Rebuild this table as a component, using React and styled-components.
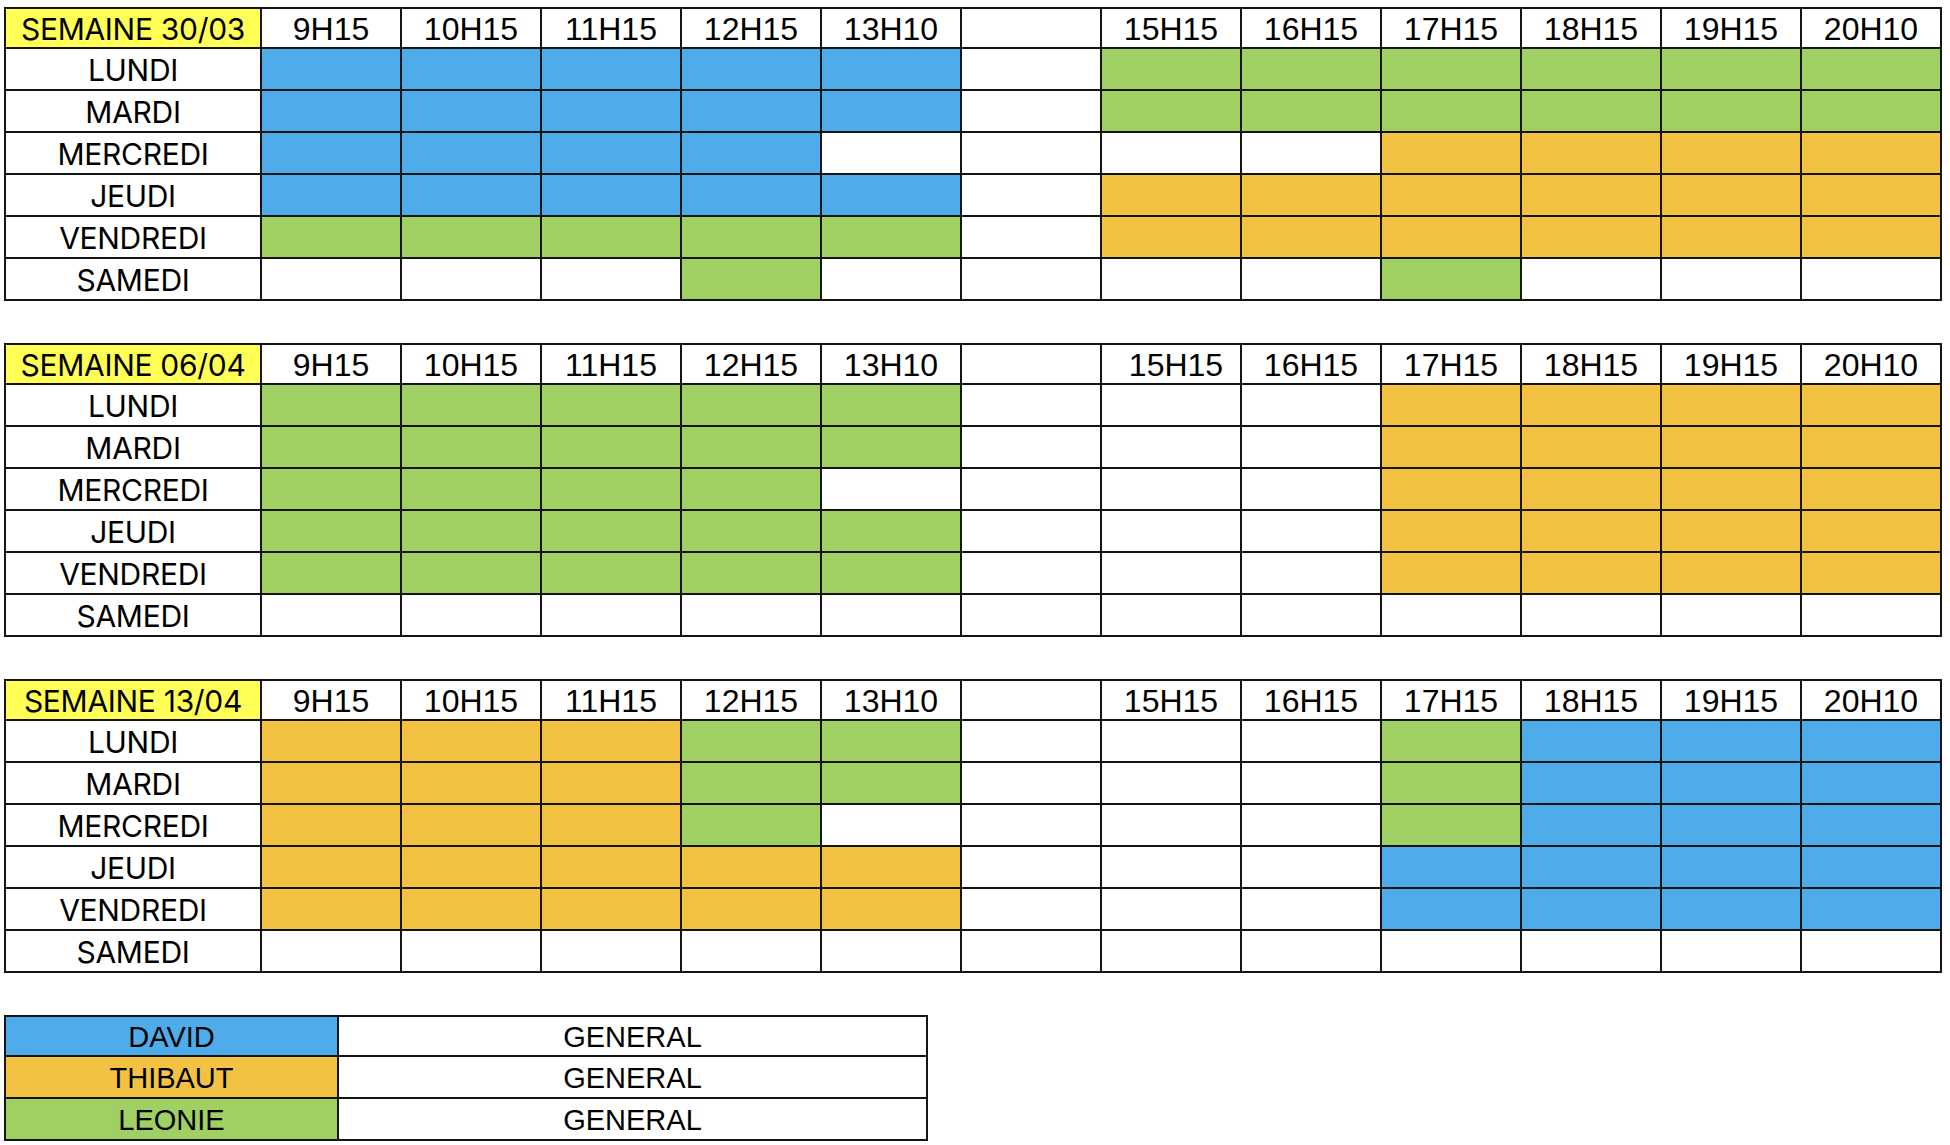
import React from "react";
import styled, { createGlobalStyle } from "styled-components";

const GlobalStyle = createGlobalStyle`
  html, body {
    margin: 0;
    padding: 0;
    background: #ffffff;
  }
  * {
    box-sizing: border-box;
  }
`;

const COLORS = {
  B: "#4facea",
  G: "#a0cf63",
  O: "#f4c243",
  _: "#ffffff",
};

const Page = styled.div`
  padding: 7px 0 0 4px;
  display: flex;
  flex-direction: column;
  gap: 42px;
`;

// header row is 40px + the 2px top border, same pitch as the other rows
const Grid = styled.div`
  display: grid;
  grid-template-columns: 256px repeat(12, 140px);
  grid-template-rows: 40px repeat(6, 42px);
  width: max-content;
  border-top: 2px solid #151515;
  border-left: 2px solid #151515;
`;

const Cell = styled.div`
  border-right: 2px solid #151515;
  border-bottom: 2px solid #151515;
  background: ${(p) => p.$bg || "#ffffff"};
  display: flex;
  align-items: center;
  justify-content: center;
  color: #000;
  white-space: nowrap;
  overflow: hidden;
`;

const WeekCell = styled(Cell)`
  background: #ffff55;
  font-family: Inter, "Noto Sans", sans-serif;
  font-size: 30px;
  letter-spacing: -0.3px;
  padding-top: 2px;
`;

const DayCell = styled(Cell)`
  font-family: Inter, "Noto Sans", sans-serif;
  font-size: 30px;
  letter-spacing: -0.3px;
  padding-top: 2px;
`;

const HourCell = styled(Cell)`
  font-family: "Liberation Sans", Arial, sans-serif;
  font-size: 32px;
  padding-top: 3px;
  padding-left: ${(p) => (p.$shift ? "10px" : "0")};
`;

const Legend = styled.div`
  display: grid;
  grid-template-columns: 333px 589px;
  grid-template-rows: 40px 42px 42px;
  width: max-content;
  border-top: 2px solid #151515;
  border-left: 2px solid #151515;
`;

const LegendCell = styled(Cell)`
  font-family: "Liberation Sans Narrow", "Liberation Sans", Arial, sans-serif;
  font-size: 29px;
  padding-top: 3px;
`;

const HOURS = [
  "9H15",
  "10H15",
  "11H15",
  "12H15",
  "13H10",
  "",
  "15H15",
  "16H15",
  "17H15",
  "18H15",
  "19H15",
  "20H10",
];

const DAYS = ["LUNDI", "MARDI", "MERCREDI", "JEUDI", "VENDREDI", "SAMEDI"];

const WEEKS = [
  {
    label: "SEMAINE 30/03",
    shift: false,
    rows: [
      "BBBBB_GGGGGG",
      "BBBBB_GGGGGG",
      "BBBB____OOOO",
      "BBBBB_OOOOOO",
      "GGGGG_OOOOOO",
      "___G____G___",
    ],
  },
  {
    label: "SEMAINE 06/04",
    shift: true,
    rows: [
      "GGGGG___OOOO",
      "GGGGG___OOOO",
      "GGGG____OOOO",
      "GGGGG___OOOO",
      "GGGGG___OOOO",
      "____________",
    ],
  },
  {
    label: "SEMAINE 13/04",
    shift: false,
    rows: [
      "OOOGG___GBBB",
      "OOOGG___GBBB",
      "OOOG____GBBB",
      "OOOOO___BBBB",
      "OOOOO___BBBB",
      "____________",
    ],
  },
];

const PEOPLE = [
  { name: "DAVID", color: COLORS.B },
  { name: "THIBAUT", color: COLORS.O },
  { name: "LEONIE", color: COLORS.G },
];

const WeekTable = ({ week }) => (
  <Grid>
    <WeekCell>{week.label}</WeekCell>
    {HOURS.map((h, i) => (
      <HourCell key={i} $shift={week.shift && i === 6}>
        {h}
      </HourCell>
    ))}
    {DAYS.map((day, r) => (
      <React.Fragment key={day}>
        <DayCell>{day}</DayCell>
        {week.rows[r].split("").map((c, i) => (
          <Cell key={i} $bg={COLORS[c]} />
        ))}
      </React.Fragment>
    ))}
  </Grid>
);

const App = () => {
  return (
    <>
      <GlobalStyle />
      <Page>
        {WEEKS.map((w) => (
          <WeekTable key={w.label} week={w} />
        ))}
        <Legend>
          {PEOPLE.map((p) => (
            <React.Fragment key={p.name}>
              <LegendCell $bg={p.color}>{p.name}</LegendCell>
              <LegendCell>GENERAL</LegendCell>
            </React.Fragment>
          ))}
        </Legend>
      </Page>
    </>
  );
};

export default App;
